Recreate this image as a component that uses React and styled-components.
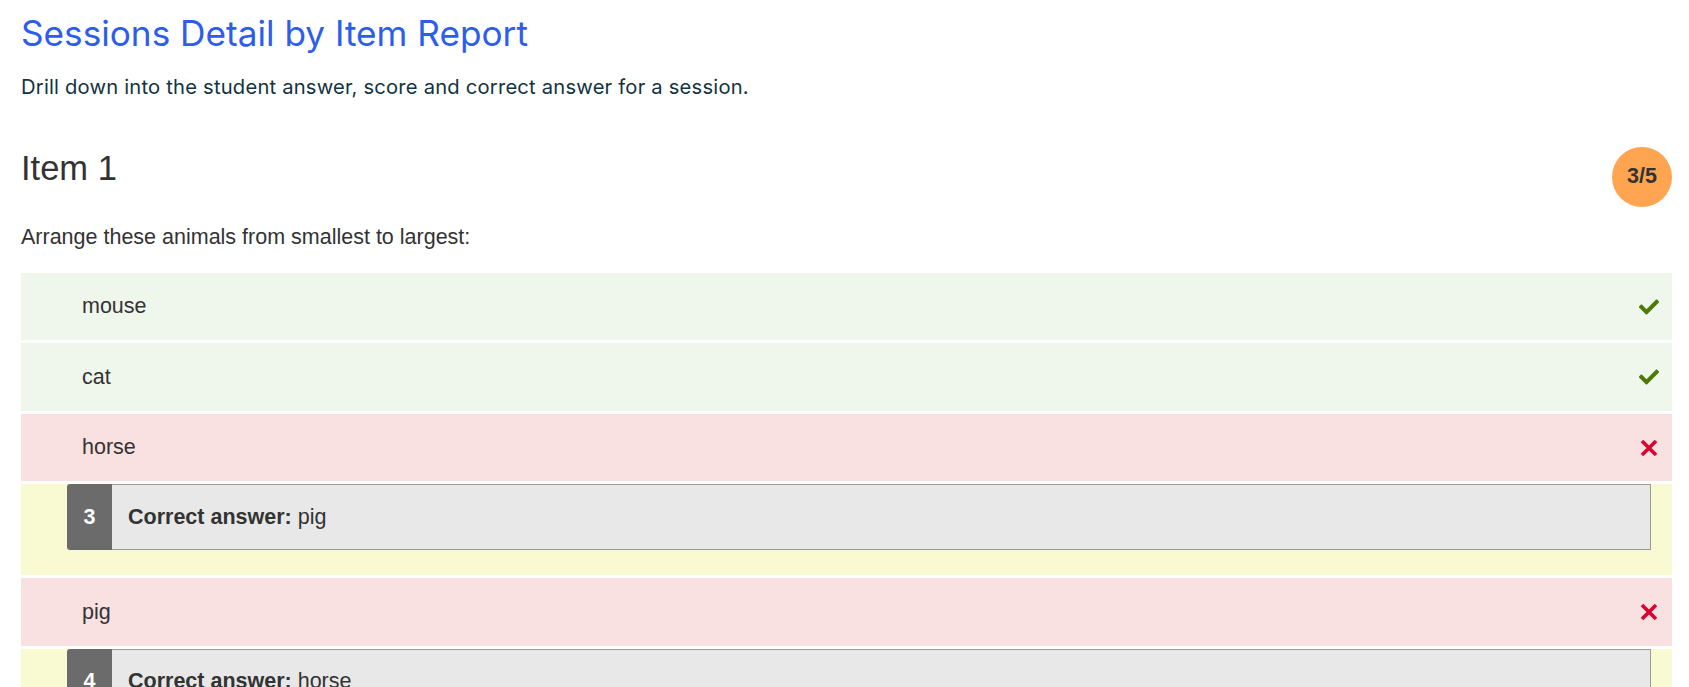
import React from "react";
import styled, { createGlobalStyle } from "styled-components";

const GlobalStyle = createGlobalStyle`
  html, body { margin: 0; padding: 0; background: #ffffff; }
  * { box-sizing: border-box; }
`;

const Page = styled.div`
  padding: 11px 17px 40px 21px;
  font-family: "Liberation Sans", Arial, sans-serif;
  color: #333333;
`;

const Title = styled.h1`
  margin: 0;
  font-family: Inter, Lato, sans-serif;
  font-weight: 400;
  font-size: 35.2px;
  line-height: 44px;
  color: #2c5ded;
`;

const Subtitle = styled.p`
  margin: 19.6px 0 0;
  font-family: Inter, Lato, sans-serif;
  font-size: 20.2px;
  line-height: 24px;
  letter-spacing: 0.2px;
  color: #13333f;
`;

const HeadingRow = styled.div`
  margin-top: 48.35px;
  display: flex;
  justify-content: space-between;
  align-items: flex-start;
`;

const ItemTitle = styled.h2`
  margin: 1px 0 0;
  font-weight: 400;
  font-size: 34.5px;
  line-height: 40px;
  color: #333333;
`;

const ScoreBadge = styled.div`
  width: 60px;
  height: 60px;
  border-radius: 50%;
  background: #ffa450;
  display: flex;
  align-items: center;
  justify-content: center;
  font-weight: 700;
  font-size: 21.5px;
  color: #333333;
`;

const Question = styled.p`
  margin: 17.5px 0 0;
  font-size: 21.5px;
  line-height: 26px;
  color: #333333;
`;

const List = styled.div`
  margin-top: 22.5px;
  display: flex;
  flex-direction: column;
  gap: 3px;
`;

const AnswerRow = styled.div`
  min-height: 67.5px;
  display: flex;
  align-items: center;
  justify-content: space-between;
  padding: 0 13px 0 61px;
  background: ${(p) => (p.$correct ? "#eff6ec" : "#fae1e1")};
  font-size: 21.5px;
  color: #333333;
`;

const IconSlot = styled.span`
  width: 20px;
  height: 20px;
  display: flex;
  align-items: center;
  justify-content: center;
`;

const CorrectionBlock = styled.div`
  background: #fafad2;
  padding: 0 21px 25px 46px;
`;

const CorrectionBox = styled.div`
  display: flex;
  height: 66px;
`;

const Index = styled.div`
  width: 45px;
  flex: none;
  background: #6b6b6b;
  border-radius: 3px 0 0 3px;
  color: #ffffff;
  font-weight: 700;
  font-size: 21.5px;
  display: flex;
  align-items: center;
  justify-content: center;
`;

const CorrectionText = styled.div`
  flex: 1;
  background: #e8e8e8;
  border: 1px solid #9a9a9a;
  border-left: none;
  display: flex;
  align-items: center;
  padding-left: 16px;
  font-size: 21.5px;
  color: #333333;
  gap: 6px;
`;

const Label = styled.strong`
  font-weight: 700;
`;

const CheckIcon = () => (
  <svg width="20" height="20" viewBox="0 0 512 512" aria-hidden="true">
    <path
      fill="#4b7a05"
      d="M173.9 439.4l-166.4-166.4c-10-10-10-26.2 0-36.2l36.2-36.2c10-10 26.2-10 36.2 0L192 312.7 432.1 72.6c10-10 26.2-10 36.2 0l36.2 36.2c10 10 10 26.2 0 36.2l-294.4 294.4c-10 10-26.2 10-36.2 0z"
    />
  </svg>
);

const CrossIcon = () => (
  <svg width="18" height="18" viewBox="0 0 18 18" aria-hidden="true">
    <path d="M2 2 L16 16 M16 2 L2 16" stroke="#d9042f" strokeWidth="3.6" strokeLinecap="butt" />
  </svg>
);

const answers = [
  { text: "mouse", correct: true },
  { text: "cat", correct: true },
  { text: "horse", correct: false, index: 3, expected: "pig" },
  { text: "pig", correct: false, index: 4, expected: "horse" },
  { text: "elephant", correct: true },
];

export default function App() {
  return (
    <>
      <GlobalStyle />
      <Page>
        <Title>Sessions Detail by Item Report</Title>
        <Subtitle>Drill down into the student answer, score and correct answer for a session.</Subtitle>
        <HeadingRow>
          <ItemTitle>Item 1</ItemTitle>
          <ScoreBadge>3/5</ScoreBadge>
        </HeadingRow>
        <Question>Arrange these animals from smallest to largest:</Question>
        <List>
          {answers.map((a) => (
            <React.Fragment key={a.text}>
              <AnswerRow $correct={a.correct}>
                <span>{a.text}</span>
                <IconSlot>{a.correct ? <CheckIcon /> : <CrossIcon />}</IconSlot>
              </AnswerRow>
              {!a.correct && (
                <CorrectionBlock>
                  <CorrectionBox>
                    <Index>{a.index}</Index>
                    <CorrectionText>
                      <Label>Correct answer:</Label>
                      <span>{a.expected}</span>
                    </CorrectionText>
                  </CorrectionBox>
                </CorrectionBlock>
              )}
            </React.Fragment>
          ))}
        </List>
      </Page>
    </>
  );
}
